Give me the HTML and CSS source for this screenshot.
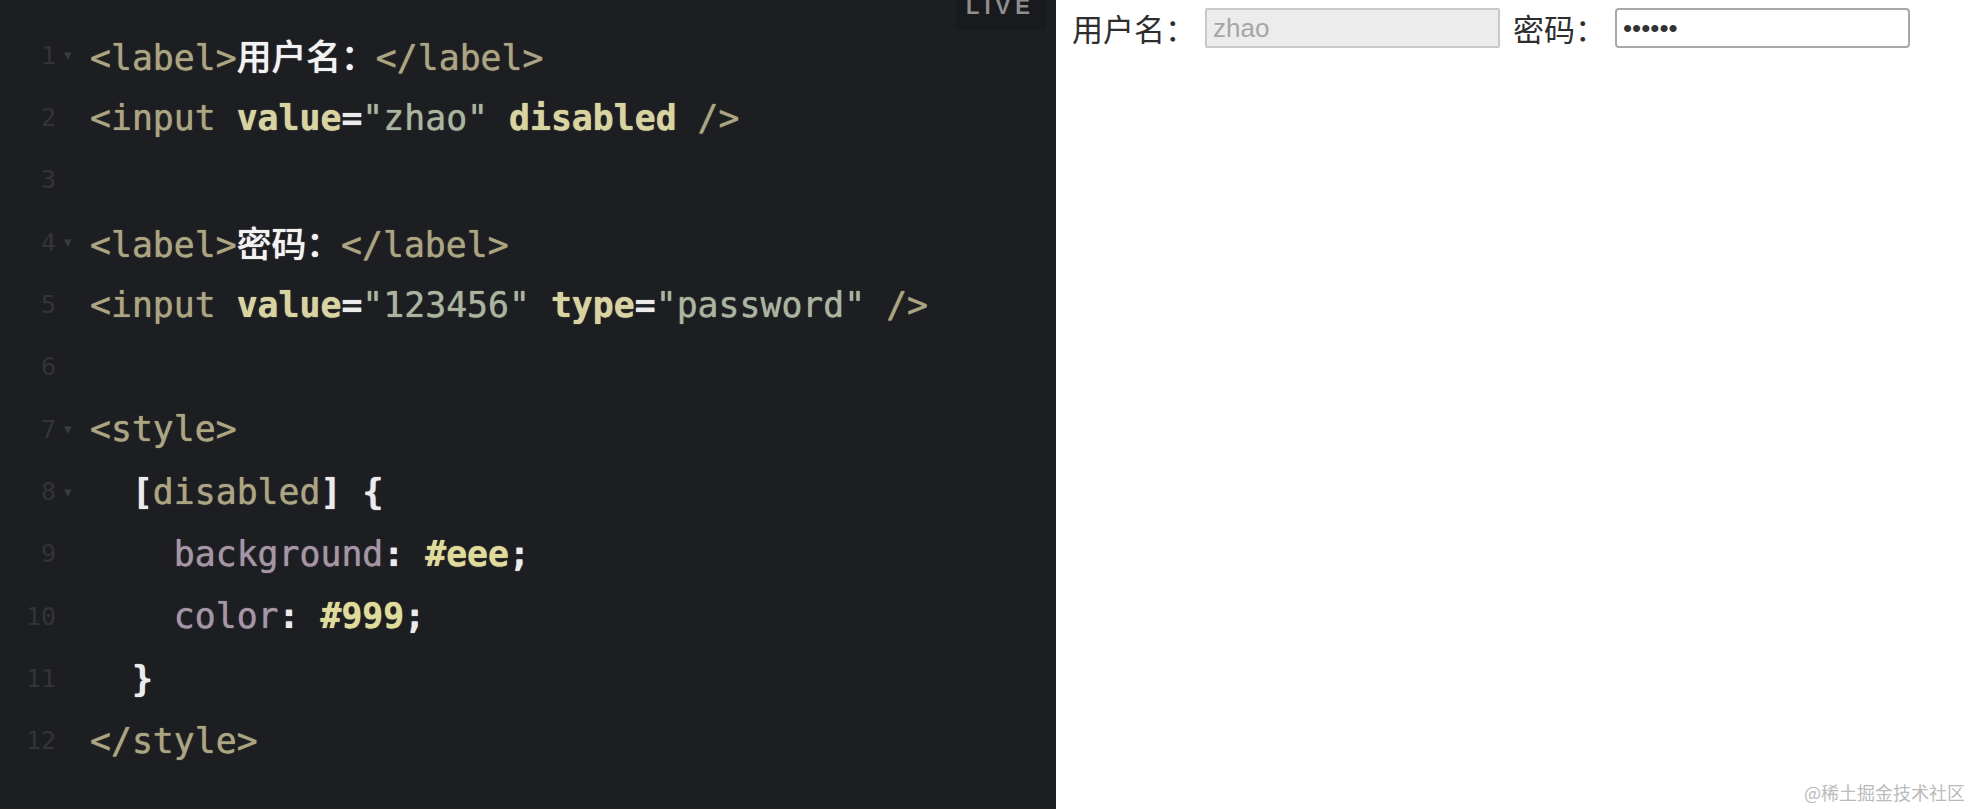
FILE: index.html
```html
<!DOCTYPE html>
<html lang="zh-CN">
<head>
<meta charset="utf-8">
<title>disabled 属性示例</title>
<link rel="stylesheet" href="styles.css">
</head>
<body>
<div class="app">
  <section class="editor">
    <div class="live">LIVE</div>
    <div class="code">
      <div class="ln">1</div><div class="fold">&#9662;</div><div class="line"><span class="tag">&lt;label&gt;</span><span class="cn">用户名：</span><span class="tag">&lt;/label&gt;</span></div>
      <div class="ln">2</div><div class="fold"></div><div class="line"><span class="tag">&lt;input</span> <span class="attr">value</span><span class="punc">=</span><span class="str">"zhao"</span> <span class="attr">disabled</span> <span class="tag">/&gt;</span></div>
      <div class="ln">3</div><div class="fold"></div><div class="line"></div>
      <div class="ln">4</div><div class="fold">&#9662;</div><div class="line"><span class="tag">&lt;label&gt;</span><span class="cn">密码：</span><span class="tag">&lt;/label&gt;</span></div>
      <div class="ln">5</div><div class="fold"></div><div class="line"><span class="tag">&lt;input</span> <span class="attr">value</span><span class="punc">=</span><span class="str">"123456"</span> <span class="attr">type</span><span class="punc">=</span><span class="str">"password"</span> <span class="tag">/&gt;</span></div>
      <div class="ln">6</div><div class="fold"></div><div class="line"></div>
      <div class="ln">7</div><div class="fold">&#9662;</div><div class="line"><span class="tag">&lt;style&gt;</span></div>
      <div class="ln">8</div><div class="fold">&#9662;</div><div class="line">  <span class="punc">[</span><span class="tag">disabled</span><span class="punc">]</span> <span class="punc">{</span></div>
      <div class="ln">9</div><div class="fold"></div><div class="line">    <span class="prop">background</span><span class="punc">:</span> <span class="val">#eee</span><span class="punc">;</span></div>
      <div class="ln">10</div><div class="fold"></div><div class="line">    <span class="prop">color</span><span class="punc">:</span> <span class="val">#999</span><span class="punc">;</span></div>
      <div class="ln">11</div><div class="fold"></div><div class="line">  <span class="punc">}</span></div>
      <div class="ln">12</div><div class="fold"></div><div class="line"><span class="tag">&lt;/style&gt;</span></div>
    </div>
  </section>
  <section class="preview">
    <div class="form">
      <label class="label">用户名：</label>
      <input class="field field-disabled" value="zhao" disabled>
      <label class="label label-gap">密码：</label>
      <input class="field field-password" value="123456" type="password">
    </div>
    <div class="watermark">@稀土掘金技术社区</div>
  </section>
</div>
</body>
</html>
```

FILE: styles.css
```css
* {
  box-sizing: border-box;
}

html, body {
  margin: 0;
  padding: 0;
  height: 100%;
  overflow: hidden;
}

body {
  background: #ffffff;
  font-family: "Liberation Sans", "Noto Sans CJK SC", sans-serif;
}

.app {
  display: flex;
  width: 1972px;
  height: 809px;
}

.editor {
  position: relative;
  width: 1056px;
  flex: 0 0 1056px;
  background: #1d1e22;
  padding-top: 24px;
}

.live {
  position: absolute;
  top: -4px;
  left: 956px;
  width: 90px;
  height: 34px;
  padding-left: 10px;
  background: #191a1d;
  color: #8e8e8e;
  font-family: "Liberation Sans", sans-serif;
  font-weight: bold;
  font-size: 22px;
  line-height: 22px;
  letter-spacing: 5px;
}

.code {
  display: grid;
  grid-template-columns: 56px 34px 1fr;
  grid-auto-rows: 62.35px;
  align-items: center;
}

.ln {
  text-align: right;
  font-family: "DejaVu Sans Mono", monospace;
  font-size: 25px;
  color: #333438;
}

.fold {
  padding-left: 8px;
  font-family: "DejaVu Sans", sans-serif;
  font-size: 15px;
  color: #3a3b3f;
}

.line {
  white-space: pre;
  font-family: "DejaVu Sans Mono", "Noto Sans CJK SC", monospace;
  font-size: 34.8px;
  color: #e6e6e6;
  text-shadow: 0 0 1px currentColor;
}

.tag {
  color: #aba582;
}

.attr {
  color: #d8d4a1;
  font-weight: bold;
}

.str {
  color: #a9b59f;
}

.punc {
  color: #ececec;
  font-weight: bold;
}

.cn {
  color: #f2f2f2;
  font-family: "Noto Sans CJK SC", sans-serif;
  font-weight: 500;
}

.prop {
  color: #a496a5;
}

.val {
  color: #dedb9b;
  font-weight: bold;
}

.preview {
  position: relative;
  flex: 1;
  background: #ffffff;
  padding: 8px 0 0 16px;
}

.form {
  display: flex;
  align-items: center;
  gap: 9px;
}

.label {
  font-family: "Noto Sans CJK SC", sans-serif;
  font-size: 31px;
  line-height: 40px;
  color: #2e2e2e;
}

.label-gap {
  margin-left: 4px;
}

.field {
  width: 295px;
  height: 40px;
  margin: 0;
  border: 2px solid #b8b8b8;
  padding: 0 6px;
  font-family: "Liberation Sans", sans-serif;
  font-size: 26px;
  outline: none;
}

.field-disabled {
  background: #ececec;
  border-color: #c9c9c9;
  border-radius: 2px;
  color: #a6a6a6;
}

.field-password {
  background: #ffffff;
  border-color: #a8a8a8;
  border-radius: 4px;
  color: #333333;
}

.watermark {
  position: absolute;
  right: 7px;
  bottom: 5px;
  font-family: "Noto Sans CJK SC", sans-serif;
  font-size: 18px;
  line-height: 24px;
  color: #bababa;
}
```
